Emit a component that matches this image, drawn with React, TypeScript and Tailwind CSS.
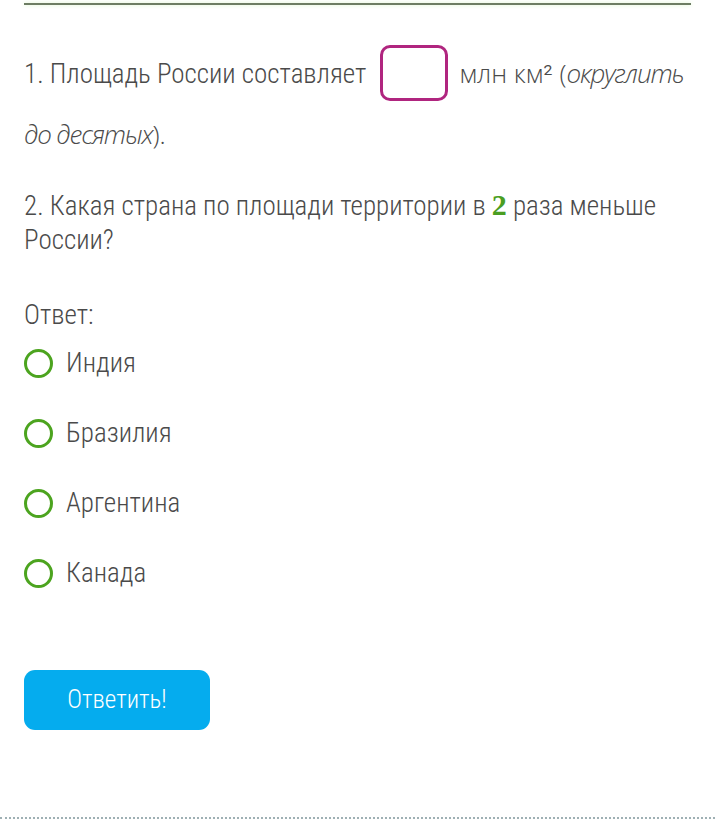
const options = ['Индия', 'Бразилия', 'Аргентина', 'Канада']

function Radio() {
  return (
    <span className="inline-block w-[29px] h-[29px] rounded-full border-[3px] border-[#4ca41f] shrink-0" />
  )
}

export default function App() {
  return (
    <div className="w-[715px] h-[823px] bg-white relative overflow-hidden text-[#4a4a4a] font-['Roboto',sans-serif] font-light font-stretch-condensed">
      <div className="mx-[24px] mt-[3px] h-[2px] bg-[#6d7d63] shadow-[0_0_4px_#d8f5c8]" />

      <div className="px-[24px] pt-[38px]">
        <p className="text-[27px] leading-[60px]">
          1. Площадь России составляет
          <span className="inline-block align-middle w-[68px] h-[56px] border-[3px] border-[#b0257f] rounded-[10px] ml-[14px] mr-[11px] -mt-[6px]" />
          <span className="font-['Open_Sans',sans-serif] font-light text-[26px] font-stretch-normal">
            млн км<span className="font-['Roboto',sans-serif]">²</span> (
            <i className="font-stretch-[88%] tracking-[-1.1px]">округлить до десятых</i>).
          </span>
        </p>

        <p className="mt-[23px] text-[27px] leading-[34px]">
          2. Какая страна по площади территории в{' '}
          <span className="font-['Liberation_Serif',serif] font-bold text-[#4a9e22] text-[30px] font-stretch-normal">2</span>{' '}
          раза меньше России?
        </p>

        <p className="mt-[41px] text-[27px] leading-[34px]">Ответ:</p>

        <div className="mt-[14px] flex flex-col gap-[36px]">
          {options.map((o) => (
            <label key={o} className="flex items-center gap-[13px] h-[34px] text-[27px]">
              <Radio />
              <span>{o}</span>
            </label>
          ))}
        </div>

        <button className="mt-[80px] w-[186px] h-[60px] rounded-[11px] bg-[#05acee] text-white text-[25px] font-light">
          Ответить!
        </button>
      </div>

      <div className="absolute left-0 right-0 top-[817px] border-t-2 border-dotted border-[#9fb0b4]" />
    </div>
  )
}
